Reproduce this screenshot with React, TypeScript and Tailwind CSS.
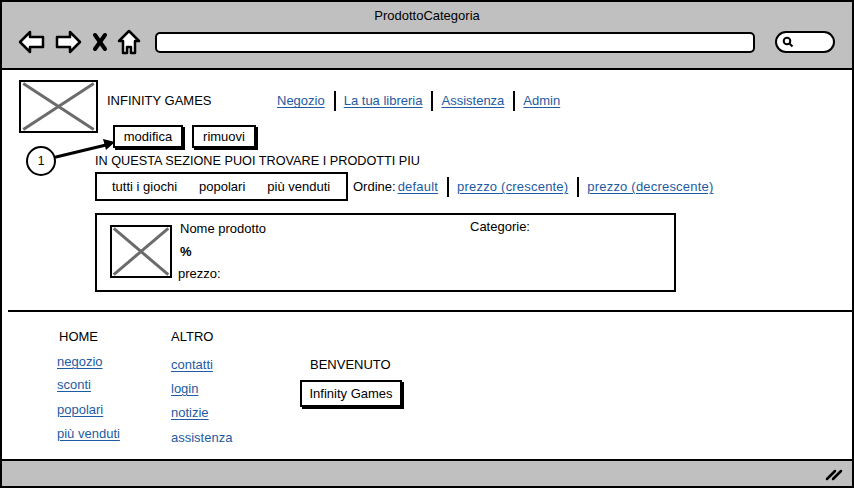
const linkCls = "text-[#1d5ba3] underline underline-offset-2 decoration-1";

const Sep = () => <span className="ml-[9px] mr-[8px] inline-block h-[20px] w-[2px] bg-black" />;

const Placeholder = ({ className }: { className: string }) => (
  <div className={`relative border-2 border-black bg-white ${className}`}>
    <svg className="absolute inset-0 h-full w-full" preserveAspectRatio="none" viewBox="0 0 100 100">
      <line x1="3" y1="3" x2="97" y2="97" stroke="#6b6b6b" strokeWidth="3" vectorEffect="non-scaling-stroke" />
      <line x1="97" y1="3" x2="3" y2="97" stroke="#6b6b6b" strokeWidth="3" vectorEffect="non-scaling-stroke" />
    </svg>
  </div>
);

const SketchButton = ({ label, className = "" }: { label: string; className?: string }) => (
  <div className={`flex items-center justify-center border-2 border-black bg-white shadow-[2px_2px_0_#000] text-[13px] ${className}`}>
    {label}
  </div>
);

const BrowserIcons = () => (
  <div className="flex items-center">
    <svg width="28" height="24" viewBox="0 0 28 24" className="ml-[16px]">
      <polygon points="2,12 12,2 12,7 25,7 25,17 12,17 12,22" fill="#fff" stroke="#000" strokeWidth="2.5" strokeLinejoin="round" />
    </svg>
    <svg width="28" height="24" viewBox="0 0 28 24" className="ml-[8px]">
      <polygon points="26,12 16,2 16,7 3,7 3,17 16,17 16,22" fill="#fff" stroke="#000" strokeWidth="2.5" strokeLinejoin="round" />
    </svg>
    <svg width="16" height="20" viewBox="0 0 16 20" className="ml-[10px]">
      <line x1="3" y1="3" x2="13" y2="17" stroke="#000" strokeWidth="4" strokeLinecap="round" />
      <line x1="13" y1="3" x2="3" y2="17" stroke="#000" strokeWidth="4" strokeLinecap="round" />
    </svg>
    <svg width="24" height="26" viewBox="0 0 24 26" className="ml-[9px]">
      <polygon points="12,2 22,12 18,12 18,24 14,24 14,18 10,18 10,24 6,24 6,12 2,12" fill="#fff" stroke="#000" strokeWidth="2.5" strokeLinejoin="round" />
    </svg>
  </div>
);

export default function App() {
  return (
    <div className="relative flex h-[488px] w-[854px] flex-col overflow-hidden border-2 border-black bg-white font-['Liberation_Sans',sans-serif] text-[13px] text-black">
      {/* browser chrome */}
      <div className="h-[68px] shrink-0 border-b-2 border-black bg-[#c0c0c0]">
        <div className="pt-[5px] text-center text-[13px] leading-[18px]">ProdottoCategoria</div>
        <div className="mt-[4px] flex items-center">
          <BrowserIcons />
          <div className="ml-[14px] h-[21px] w-[600px] rounded-[5px] border-2 border-black bg-white" />
          <div className="ml-[20px] flex h-[22px] w-[60px] items-center rounded-full border-2 border-black bg-white pl-[5px]">
            <svg width="12" height="12" viewBox="0 0 12 12">
              <circle cx="5" cy="5" r="3.3" fill="none" stroke="#000" strokeWidth="2" />
              <line x1="7.5" y1="7.5" x2="10.5" y2="10.5" stroke="#000" strokeWidth="2" />
            </svg>
          </div>
        </div>
      </div>

      {/* page */}
      <div className="flex-1">
        <div className="flex pl-[17px] pt-[10px]">
          <Placeholder className="h-[53px] w-[79px]" />
          <div className="ml-[9px]">
            <div className="flex h-[42px] items-center">
              <span className="w-[170px]">INFINITY GAMES</span>
              <a className={linkCls}>Negozio</a>
              <Sep />
              <a className={linkCls}>La tua libreria</a>
              <Sep />
              <a className={linkCls}>Assistenza</a>
              <Sep />
              <a className={linkCls}>Admin</a>
            </div>
            <div className="ml-[6px] mt-[3px] flex gap-[9px]">
              <SketchButton label="modifica" className="h-[23px] w-[70px]" />
              <SketchButton label="rimuovi" className="h-[23px] w-[64px]" />
            </div>
          </div>
        </div>

        <div className="pl-[93px]">
          <div className="mt-[5px] text-[12.7px] leading-[16px]">IN QUESTA SEZIONE PUOI TROVARE I PRODOTTI PIU</div>
          <div className="mt-[3px] flex items-center">
            <div className="flex h-[29px] w-[253px] items-center gap-[22px] border-2 border-black pl-[15px]">
              <span>tutti i giochi</span>
              <span>popolari</span>
              <span>più venduti</span>
            </div>
            <span className="ml-[5px] mr-[2px]">Ordine:</span>
            <a className={`${linkCls} tracking-[0.2px]`}>default</a>
            <Sep />
            <a className={`${linkCls} tracking-[0.2px]`}>prezzo (crescente)</a>
            <Sep />
            <a className={`${linkCls} tracking-[0.2px]`}>prezzo (decrescente)</a>
          </div>

          <div className="mt-[12px] flex h-[79px] w-[581px] border-2 border-black pl-[13px] pt-[10px]">
            <Placeholder className="h-[53px] w-[62px]" />
            <div className="ml-[8px] flex w-[290px] flex-col">
              <span className="-mt-[4px] leading-[16px]">Nome prodotto</span>
              <span className="mt-[7px] font-bold leading-[16px]">%</span>
              <span className="-ml-[2px] mt-[6px] leading-[16px]">prezzo:</span>
            </div>
            <span className="-mt-[6px] leading-[16px]">Categorie:</span>
          </div>
        </div>

        <div className="ml-[6px] mt-[18px] border-t-2 border-black" />

        {/* footer */}
        <div className="flex pl-[55px] pt-[17px]">
          <div className="flex w-[114px] flex-col">
            <span className="pl-[2px] leading-[16px]">HOME</span>
            <a className={`${linkCls} mt-[9px] leading-[16px]`}>negozio</a>
            <a className={`${linkCls} mt-[7px] leading-[16px]`}>sconti</a>
            <a className={`${linkCls} mt-[9px] leading-[16px]`}>popolari</a>
            <a className={`${linkCls} mt-[8px] leading-[16px]`}>più venduti</a>
          </div>
          <div className="flex w-[129px] flex-col">
            <span className="leading-[16px]">ALTRO</span>
            <a className={`${linkCls} mt-[12px] leading-[16px]`}>contatti</a>
            <a className={`${linkCls} mt-[8px] leading-[16px]`}>login</a>
            <a className={`${linkCls} mt-[8px] leading-[16px]`}>notizie</a>
            <span className="mt-[9px] leading-[16px] text-[#1d5ba3]">assistenza</span>
          </div>
          <div className="flex flex-col pt-[28px]">
            <span className="pl-[10px] leading-[16px]">BENVENUTO</span>
            <SketchButton label="Infinity Games" className="mt-[7px] h-[27px] w-[102px]" />
          </div>
        </div>
      </div>

      {/* status bar */}
      <div className="flex h-[27px] shrink-0 items-center justify-end border-t-2 border-black bg-[#c0c0c0] pr-[8px]">
        <svg width="20" height="14" viewBox="0 0 20 14">
          <line x1="3" y1="12" x2="11" y2="4" stroke="#000" strokeWidth="2.5" strokeLinecap="round" />
          <line x1="9" y1="12" x2="17" y2="4" stroke="#000" strokeWidth="2.5" strokeLinecap="round" />
        </svg>
      </div>

      {/* annotation callout */}
      <div className="absolute left-[24px] top-[144px] flex h-[30px] w-[30px] items-center justify-center rounded-full border-2 border-black bg-white text-[12px]">
        1
      </div>
      <svg className="pointer-events-none absolute left-0 top-0" width="854" height="488">
        <line x1="54" y1="155" x2="104" y2="143" stroke="#000" strokeWidth="3" strokeLinecap="round" />
        <polygon points="113,140 101,137 104,148" fill="#000" />
      </svg>
    </div>
  );
}
